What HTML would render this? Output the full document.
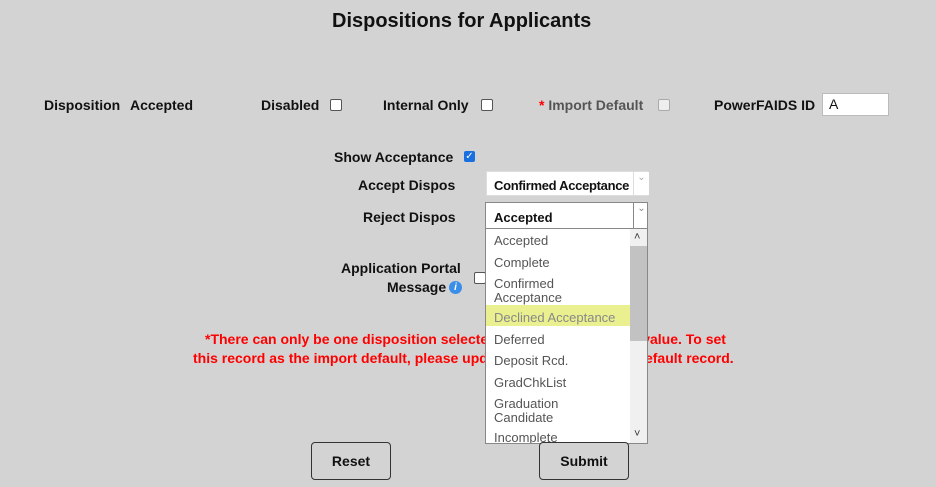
<!DOCTYPE html>
<html><head><style>
body{margin:0;width:936px;height:487px;background:#d3d3d3;font-family:"Liberation Sans",sans-serif;position:relative;overflow:hidden;color:#111}
.a{position:absolute;white-space:nowrap}
.b{font-weight:bold;font-size:14px}
.cb{position:absolute;width:10px;height:10px;background:#fff;border:1px solid #555;border-radius:2px}
.red{color:#f00;font-weight:bold;font-size:14px}
.opt{position:absolute;left:8px;font-size:13px;color:#555;line-height:13.5px}
.btn{position:absolute;border:1px solid #333;border-radius:4px;background:#d3d3d3;font-weight:bold;font-size:14px;text-align:center}
</style></head><body>
<div class="a" style="left:332px;top:10px;font-size:20px;font-weight:bold">Dispositions for Applicants</div>
<div class="a b" style="left:44px;top:97px">Disposition</div>
<div class="a b" style="left:130px;top:97px">Accepted</div>
<div class="a b" style="left:261px;top:97px">Disabled</div>
<div class="cb" style="left:330px;top:99px"></div>
<div class="a b" style="left:383px;top:97px">Internal Only</div>
<div class="cb" style="left:481px;top:99px"></div>
<div class="a b" style="left:539px;top:97px;color:#555"><span style="color:#f00">*</span> Import Default</div>
<div class="cb" style="left:658px;top:99px;border-color:#aaa;background:#eee"></div>
<div class="a b" style="left:714px;top:97px">PowerFAIDS ID</div>
<div class="a" style="left:822px;top:93px;width:67px;height:23px;background:#fff;border:1px solid #bbb;font-size:14px;line-height:21px;padding-left:6px;box-sizing:border-box">A</div>
<div class="a b" style="left:334px;top:149px">Show Acceptance</div>
<div class="a" style="left:464px;top:151px;width:11px;height:11px;background:#1a6fe0;border-radius:2px;color:#fff;font-size:10px;line-height:11px;text-align:center">✓</div>
<div class="a b" style="left:358px;top:177px">Accept Dispos</div>
<div class="a" style="left:486px;top:171px;width:162px;height:25px;background:#fff;border:1px solid #ddd;box-sizing:border-box"><span class="a" style="left:7px;top:6px;font-size:13px;font-weight:bold;letter-spacing:-0.3px">Confirmed Acceptance</span><span class="a" style="left:146px;top:0px;width:15px;height:23px;background:#fff;color:#aaa;font-size:10px;border-left:1px solid #ddd;text-align:center">⌄</span></div>
<div class="a b" style="left:363px;top:209px">Reject Dispos</div>
<div class="a" style="left:485px;top:202px;width:163px;height:27px;background:#fff;border:1px solid #888;box-sizing:border-box"><span class="a" style="left:8px;top:7px;font-size:13px;font-weight:bold">Accepted</span><span class="a" style="left:147px;top:0;width:15px;height:25px;color:#888;font-size:10px;border-left:1px solid #888;text-align:center">⌄</span></div>
<div class="a b" style="left:341px;top:260px">Application Portal</div>
<div class="a b" style="left:387px;top:279px">Message</div>
<div class="a" style="left:449px;top:281px;width:13px;height:13px;border-radius:50%;background:#3a8ee8;color:#fff;font-size:10px;font-style:italic;font-weight:bold;text-align:center;line-height:13px">i</div>
<div class="cb" style="left:474px;top:272px"></div>
<div class="a red" style="left:205px;top:331px">*There can only be one disposition selected as the import default value. To set</div>
<div class="a red" style="left:193px;top:350px">this record as the import default, please update the current import default record.</div>
<div class="a" style="left:485px;top:228px;width:163px;height:216px;background:#fff;border:1px solid #888;box-sizing:border-box;overflow:hidden">
<div class="a" style="left:144px;top:0;width:17px;height:214px;background:#f0f0f0"></div>
<div class="a" style="left:144px;top:17px;width:17px;height:95px;background:#c2c2c2"></div>
<div class="a" style="left:148px;top:2px;font-size:11px;color:#333">˄</div>
<div class="a" style="left:148px;top:199px;font-size:11px;color:#333">˅</div>
<div class="a" style="left:0;top:76px;width:144px;height:21px;background:#eaf08f"></div>
<div class="opt" style="top:5px">Accepted</div>
<div class="opt" style="top:27px">Complete</div>
<div class="opt" style="top:48px">Confirmed<br>Acceptance</div>
<div class="opt" style="top:82px;color:#888">Declined Acceptance</div>
<div class="opt" style="top:104px">Deferred</div>
<div class="opt" style="top:125px">Deposit Rcd.</div>
<div class="opt" style="top:147px">GradChkList</div>
<div class="opt" style="top:168px">Graduation<br>Candidate</div>
<div class="opt" style="top:202px">Incomplete</div>
</div>
<div class="btn" style="left:311px;top:442px;width:78px;height:36px;line-height:36px">Reset</div>
<div class="btn" style="left:539px;top:442px;width:88px;height:36px;line-height:36px">Submit</div>
</body></html>
